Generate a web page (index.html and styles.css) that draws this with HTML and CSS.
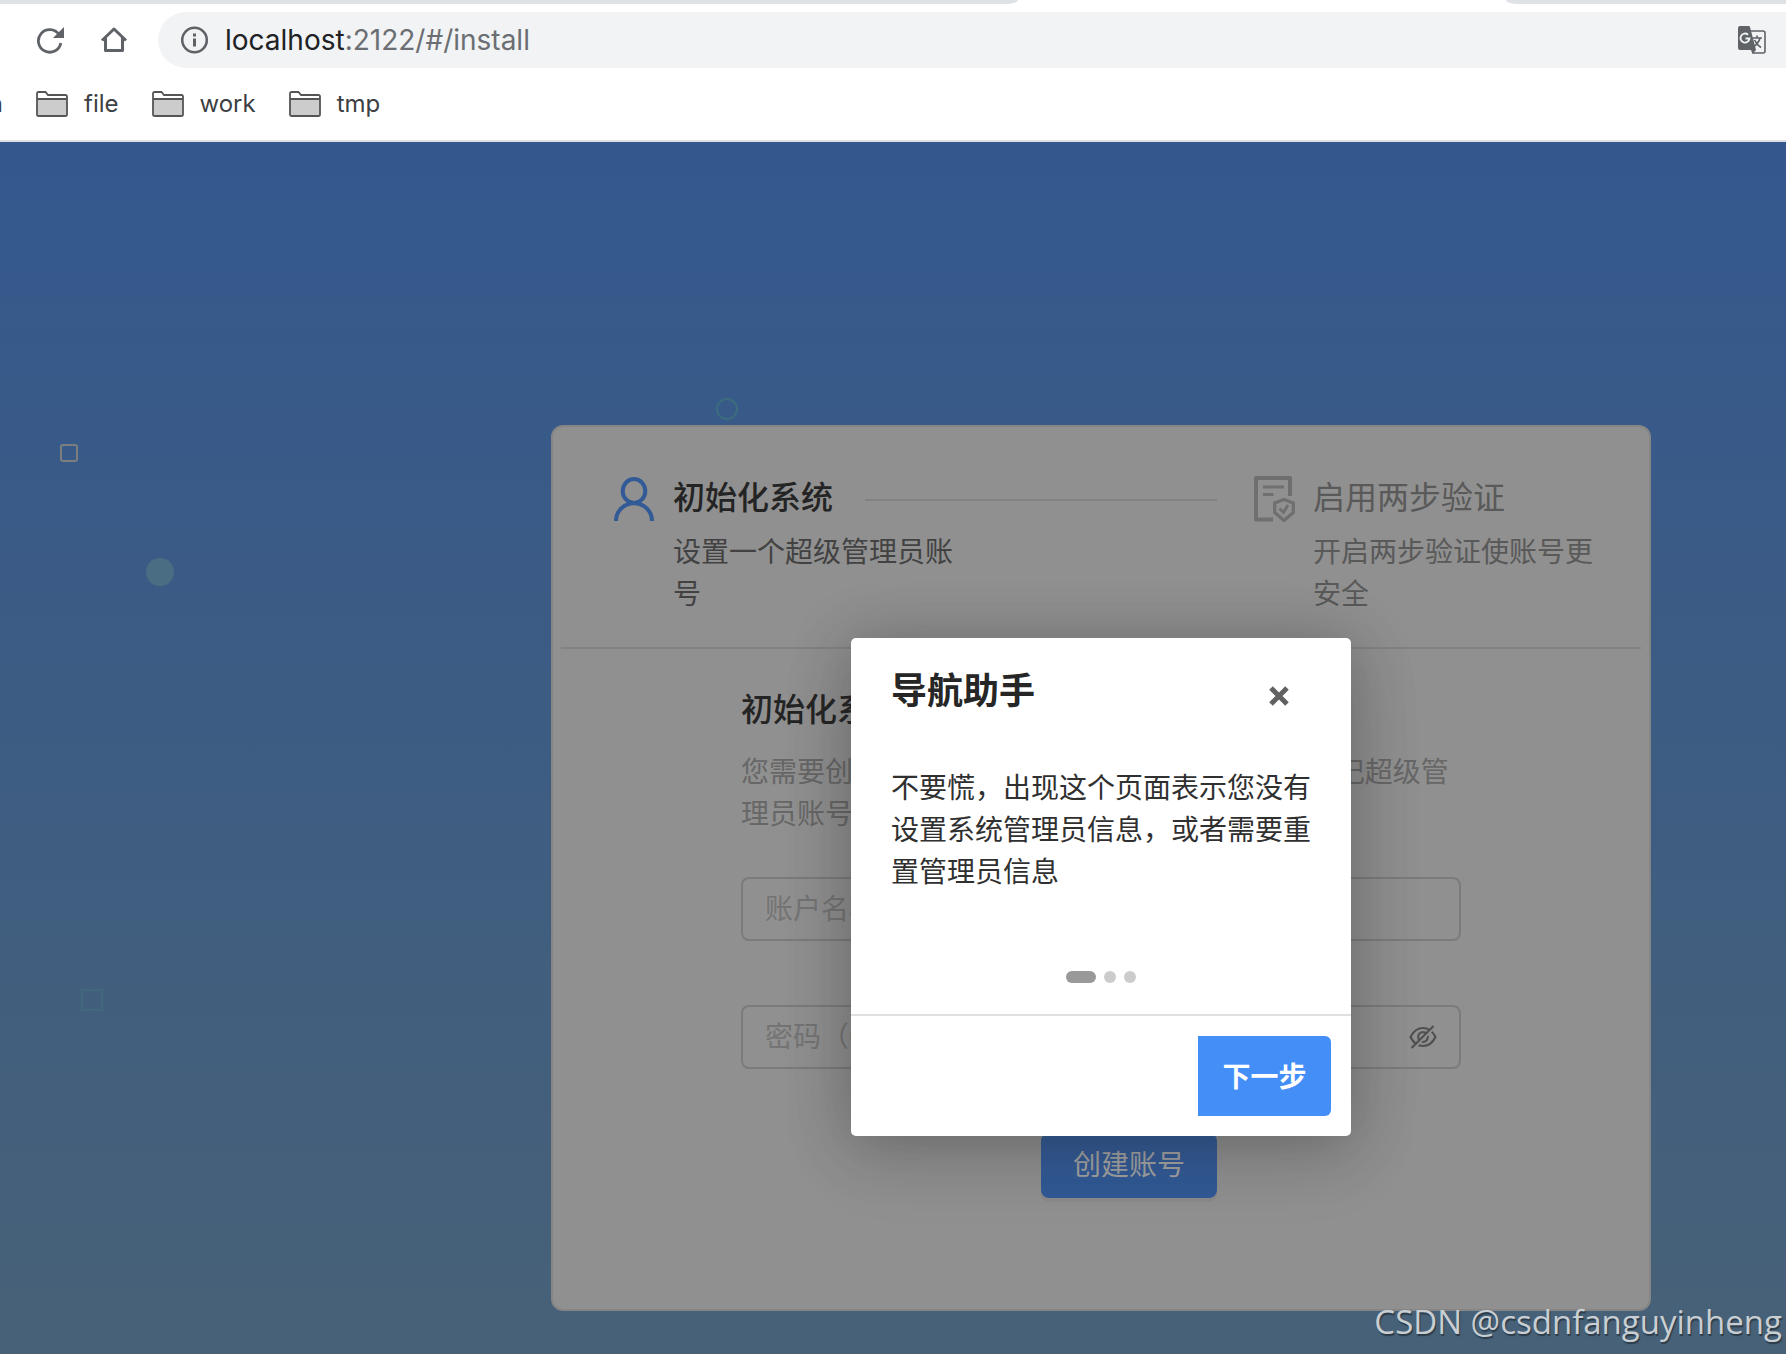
FILE: index.html
```html
<!DOCTYPE html>
<html lang="zh-CN">
<head>
<meta charset="utf-8">
<meta name="viewport" content="width=device-width, initial-scale=1">
<title>初始化系统</title>
<link rel="stylesheet" href="styles.css">
</head>
<body>
<header class="browser">
  <div class="tab-strip">
    <div class="tabs-before"></div>
    <div class="tab-active"></div>
    <div class="tabs-after"></div>
  </div>
  <div class="toolbar">
    <button class="tool-button" type="button" aria-label="Reload">
      <svg width="28" height="28" viewBox="0 0 28 28"><path d="M23 8.500A11.300 11.300 0 1 0 24.800 17" fill="none" stroke="#5f6368" stroke-width="2.800"/><path d="M28 1v11H17z" fill="#5f6368"/></svg>
    </button>
    <button class="tool-button" type="button" aria-label="Home">
      <svg width="28" height="28" viewBox="0 0 28 28"><path d="M2 14.500 14 3l12 11.500M5.500 12v12.500h17V12" fill="none" stroke="#5f6368" stroke-width="3" stroke-linejoin="round"/></svg>
    </button>
    <div class="omnibox">
      <svg width="28" height="28" viewBox="0 0 28 28"><circle cx="13.500" cy="14" r="12.300" fill="none" stroke="#5f6368" stroke-width="2.600"/><path d="M12 7.500h3v3h-3zM12 12.500h3v8h-3z" fill="#5f6368"/></svg>
      <div class="url" role="textbox" aria-label="Address"><span class="url-host">localhost</span>:2122/#/install</div>
      <button class="tool-button" type="button" aria-label="Translate">
        <svg width="28" height="28" viewBox="0 0 28 28"><path d="M12 5h13a2 2 0 0 1 2 2v18a2 2 0 0 1-2 2H14.500" fill="none" stroke="#5f6368" stroke-width="1.600"/><path d="M2 0h8.500a1.500 1.500 0 0 1 1.500 1L18 24l-3.500 4-1.500-4H2a2 2 0 0 1-2-2V2a2 2 0 0 1 2-2z" fill="#5f6368"/><path d="M10 8.700A4.500 4.500 0 1 0 11.500 12.500H7.500" fill="none" stroke="#f1f3f4" stroke-width="1.900"/><path d="M14.500 12h9.500M19 9.500V12M22 12c-1 4-3.500 6.500-6 8.500M16.500 14c1.500 3.500 3.500 5.500 6.500 7.500" fill="none" stroke="#5f6368" stroke-width="1.700"/></svg>
      </button>
    </div>
  </div>
  <nav class="bookmarks" aria-label="Bookmarks">
    <a class="bookmark bookmark-cut" href="#">n</a>
    <a class="bookmark" href="#"><svg width="32" height="26" viewBox="0 0 32 26"><path d="M1 8h30v15.500a1.500 1.500 0 0 1-1.500 1.500h-27A1.500 1.500 0 0 1 1 23.500z" fill="#ccc"/><path d="M1 8V2.500A1.500 1.500 0 0 1 2.500 1h7L12 4h17.500A1.500 1.500 0 0 1 31 5.500v18a1.500 1.500 0 0 1-1.500 1.500h-27A1.500 1.500 0 0 1 1 23.500V8h30" fill="none" stroke="#555" stroke-width="1.800"/></svg>file</a>
    <a class="bookmark" href="#"><svg width="32" height="26" viewBox="0 0 32 26"><path d="M1 8h30v15.500a1.500 1.500 0 0 1-1.500 1.500h-27A1.500 1.500 0 0 1 1 23.500z" fill="#ccc"/><path d="M1 8V2.500A1.500 1.500 0 0 1 2.500 1h7L12 4h17.500A1.500 1.500 0 0 1 31 5.500v18a1.500 1.500 0 0 1-1.500 1.500h-27A1.500 1.500 0 0 1 1 23.500V8h30" fill="none" stroke="#555" stroke-width="1.800"/></svg>work</a>
    <a class="bookmark" href="#"><svg width="32" height="26" viewBox="0 0 32 26"><path d="M1 8h30v15.500a1.500 1.500 0 0 1-1.500 1.500h-27A1.500 1.500 0 0 1 1 23.500z" fill="#ccc"/><path d="M1 8V2.500A1.500 1.500 0 0 1 2.500 1h7L12 4h17.500A1.500 1.500 0 0 1 31 5.500v18a1.500 1.500 0 0 1-1.500 1.500h-27A1.500 1.500 0 0 1 1 23.500V8h30" fill="none" stroke="#555" stroke-width="1.800"/></svg>tmp</a>
  </nav>
</header>

<main class="page">
  <span class="shape ring"></span>
  <span class="shape square"></span>
  <span class="shape disc"></span>
  <span class="shape square-faint"></span>

  <section class="card">
    <ol class="steps">
      <li class="step step-current">
        <span class="step-icon">
          <svg width="48" height="48" viewBox="0 0 48 48"><g fill="none" stroke="#315a96" stroke-width="4"><ellipse cx="25" cy="17" rx="11.300" ry="12"/><path d="M7 47C7 37 15 29.300 25 29.300S43 37 43 47"/></g></svg>
        </span>
        <div class="step-content">
          <h2 class="step-title">初始化系统</h2>
          <p class="step-text">设置一个超级管理员账号</p>
        </div>
      </li>
      <li class="step">
        <span class="step-icon">
          <svg width="48" height="48" viewBox="0 0 48 48"><g fill="none" stroke="#6f6f6f"><path d="M41 22V4H7v41.500h17" stroke-width="4" stroke-linejoin="round"/><path d="M14 13h21M14 20.500h10.500" stroke-width="3.200"/><path d="M35 25.500l9.300 3.500v9.500L35 46.500l-9.300-8V29z" stroke-width="3.200"/><path d="M30.500 34.500l4 4 4.500-7.500" stroke-width="2.800"/></g></svg>
        </span>
        <div class="step-content">
          <h2 class="step-title">启用两步验证</h2>
          <p class="step-text">开启两步验证使账号更安全</p>
        </div>
      </li>
    </ol>

    <form class="account">
      <h1 class="account-title">初始化系统</h1>
      <p class="account-text">您需要创建一个账户用以后续登录管理系统,请牢记超级管理员账号密码</p>
      <div class="field"><input type="text" placeholder="账户名称" aria-label="账户名称"></div>
      <div class="field">
        <input type="password" placeholder="密码（6-18位数字、字母、符号组合）" aria-label="密码">
        <button class="eye" type="button" aria-label="显示密码">
          <svg width="28" height="28" viewBox="0 0 28 28"><g fill="none" stroke="#505050" stroke-width="2.200"><path d="M1.500 14C4.500 8 9 5 14 5s9.500 3 12.500 9c-3 6-7.500 9-12.500 9S4.500 20 1.500 14z"/><circle cx="14" cy="14" r="4.800"/></g><path d="M4.500 26 26 4" stroke="#8f8f8f" stroke-width="2"/><path d="M2.500 25 24.500 3" stroke="#505050" stroke-width="2.200"/></svg>
        </button>
      </div>
      <div class="actions"><button class="create" type="submit">创建账号</button></div>
    </form>

    <div class="guide" role="dialog" aria-labelledby="guide-title">
      <div class="guide-head">
        <h2 class="guide-title" id="guide-title">导航助手</h2>
        <button class="guide-close" type="button" aria-label="关闭">
          <svg width="20" height="20" viewBox="0 0 20 20"><path d="M2 2l16 16M18 2 2 18" stroke="#616161" stroke-width="5"/></svg>
        </button>
      </div>
      <p class="guide-text">不要慌，出现这个页面表示您没有设置系统管理员信息，或者需要重置管理员信息</p>
      <div class="dots"><span class="dot dot-current"></span><span class="dot"></span><span class="dot"></span></div>
      <div class="guide-foot"><button class="next" type="button">下一步</button></div>
    </div>
  </section>

  <div class="watermark">CSDN @csdnfanguyinheng</div>
</main>
</body>
</html>
```
FILE: styles.css
```css
* {
  box-sizing: border-box;
}

body {
  margin: 0;
  display: flex;
  flex-direction: column;
  min-height: 100vh;
  font-family: "Noto Sans CJK SC", sans-serif;
  font-size: 28px;
  line-height: 42px;
}

h1, h2, p, ol {
  margin: 0;
  padding: 0;
}

button {
  font: inherit;
  border: 0;
  padding: 0;
  background: none;
}

svg {
  display: block;
  flex: none;
}

/* Browser chrome */
.browser {
  background: #fff;
  border-bottom: 2px solid #dcdfe1;
  font-family: Inter, sans-serif;
}

.tab-strip {
  display: flex;
  height: 4px;
}

.tabs-before {
  width: 57%;
  background: #dee1e6;
  border-bottom-right-radius: 12px 4px;
}

.tab-active {
  width: 488px;
}

.tabs-after {
  flex: 1;
  background: #dee1e6;
  border-bottom-left-radius: 12px 4px;
}

.toolbar {
  display: flex;
  align-items: center;
  gap: 36px;
  padding: 8px 0 8px 36px;
}

.omnibox {
  flex: 1;
  display: flex;
  align-items: center;
  gap: 16px;
  height: 56px;
  margin-left: -6px;
  padding: 0 20px 0 23px;
  border-radius: 28px 0 0 28px;
  background: #f1f3f4;
}

.url {
  flex: 1;
  color: #6b6e72;
}

.url-host {
  color: #202124;
}

.bookmarks {
  display: flex;
  align-items: center;
  gap: 33px;
  height: 64px;
  padding-bottom: 8px;
}

.bookmark {
  display: flex;
  align-items: center;
  gap: 16px;
  color: #3c4043;
  font-size: 24px;
  text-decoration: none;
}

.bookmark-cut {
  width: 3px;
  justify-content: flex-end;
  overflow: hidden;
}

/* Page */
.page {
  position: relative;
  flex: 1;
  display: flex;
  justify-content: flex-end;
  align-items: flex-start;
  padding: 283px 135px 43px;
  overflow: hidden;
  background: linear-gradient(#34588e, #476177);
}

.shape {
  position: absolute;
}

.ring {
  left: 716px;
  top: 256px;
  width: 22px;
  height: 22px;
  border: 2px solid #3c6d7e;
  border-radius: 50%;
}

.square {
  left: 60px;
  top: 302px;
  width: 18px;
  height: 18px;
  border: 2px solid #7c7f80;
  border-radius: 3px;
}

.disc {
  left: 146px;
  top: 416px;
  width: 28px;
  height: 28px;
  border-radius: 50%;
  background: #4b6d84;
}

.square-faint {
  left: 81px;
  top: 847px;
  width: 22px;
  height: 22px;
  border: 2px solid #40697a;
}

.card {
  position: relative;
  width: 1100px;
  padding: 0 8px 111px;
  border: 2px solid #858585;
  border-radius: 12px;
  background: #909090;
}

.steps {
  display: flex;
  gap: 32px;
  padding: 39px 48px 34px;
  border-bottom: 2px solid #828282;
  list-style: none;
}

.step {
  display: flex;
  gap: 16px;
  color: #595959;
}

.step-icon {
  padding-top: 8px;
}

.step-title {
  display: flex;
  align-items: center;
  gap: 32px;
  margin-bottom: 5px;
  font-size: 32px;
  font-weight: 400;
  line-height: 58px;
}

.step-text {
  width: 280px;
}

.step-current {
  flex: 1;
  color: #424242;
}

.step-current .step-content {
  flex: 1;
}

.step-current .step-title {
  color: #242424;
  font-weight: 500;
}

.step-current .step-title::after {
  content: "";
  flex: 1;
  height: 2px;
  margin-top: 10px;
  background: #828282;
}

.account {
  width: 720px;
  margin: 0 auto;
  padding-top: 37px;
}

.account-title {
  color: #242424;
  font-size: 32px;
  font-weight: 500;
  line-height: 42px;
}

.account-text {
  margin: 21px 0 44px;
  color: #676767;
}

.field {
  display: flex;
  align-items: center;
  height: 64px;
  margin-bottom: 64px;
  padding: 0 22px;
  border: 2px solid #7b7b7b;
  border-radius: 8px;
}

.field input {
  flex: 1;
  min-width: 0;
  padding: 0 0 4px;
  border: 0;
  outline: 0;
  background: none;
  color: #242424;
  font: inherit;
}

.field input::placeholder {
  color: #747474;
  opacity: 1;
}

.actions {
  display: grid;
  grid-template-columns: 10fr 14fr;
}

.create {
  grid-column: 2;
  justify-self: start;
  width: 176px;
  height: 65px;
  padding-bottom: 6px;
  border-radius: 8px;
  background: #325a96;
  box-shadow: 0 4px 0 #8a8a8a;
  color: #a2a2a2;
}

/* Guide dialog */
.guide {
  position: absolute;
  top: 211px;
  left: calc(50% - 250px);
  width: 500px;
  border-radius: 5px;
  background: #fff;
  box-shadow: 0 6px 60px rgba(33, 33, 33, 0.3), 0 20px 80px rgba(33, 33, 33, 0.1);
}

.guide-head {
  display: flex;
  justify-content: space-between;
  align-items: center;
  padding: 29px 62px 0 40px;
}

.guide-title {
  color: #262626;
  font-size: 36px;
  font-weight: 700;
}

.guide-close {
  padding-top: 16px;
}

.guide-text {
  padding: 56px 40px 0;
  color: #303030;
}

.dots {
  display: flex;
  justify-content: center;
  gap: 8px;
  padding: 80px 0 31px;
}

.dot {
  width: 12px;
  height: 12px;
  border-radius: 6px;
  background: #ccc;
}

.dot-current {
  width: 30px;
  background: #999;
}

.guide-foot {
  display: flex;
  justify-content: flex-end;
  padding: 20px;
  border-top: 2px solid #e0e0e0;
}

.next {
  width: 133px;
  height: 80px;
  padding-bottom: 3px;
  border-radius: 0 6px 6px 0;
  background: #448ef7;
  color: #fff;
  font-weight: 700;
}

.watermark {
  position: absolute;
  right: 4px;
  bottom: 11px;
  color: #c9ced3;
  font-family: "Open Sans", sans-serif;
  font-size: 33px;
  text-shadow: 1px 2px 1px rgba(0, 0, 0, 0.4);
}
```
